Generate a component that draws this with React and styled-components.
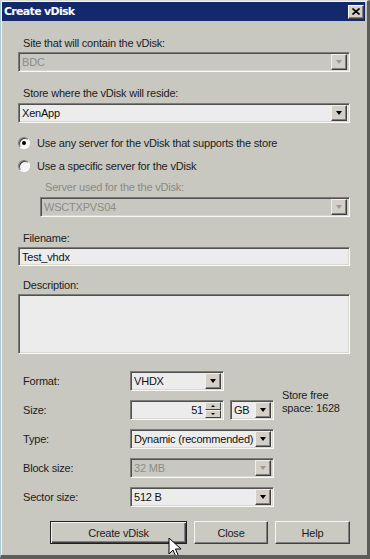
import React from 'react';
import styled, { createGlobalStyle } from 'styled-components';

const GlobalStyle = createGlobalStyle`
  html, body {
    margin: 0;
    padding: 0;
    background: #c8c8c0;
  }
  body {
    font-family: "Liberation Sans", Arial, sans-serif;
    font-size: 11px;
    letter-spacing: -0.2px;
    color: #1c1c1c;
  }
`;

const Window = styled.div`
  position: relative;
  width: 370px;
  height: 559px;
  box-sizing: border-box;
  background: #c8c8c0;
  border-top: 1px solid #dcdcd6;
  border-left: 1px solid #a8c8d0;
  border-right: 3px solid #5c5c58;
  border-bottom: 4px solid #5c5c58;
  box-shadow: inset 1px 1px 0 #f4f4f0;
  padding: 1px 0 0 1px;
  overflow: hidden;
`;

const TitleBar = styled.div`
  height: 19px;
  margin-right: 2px;
  background: #14286c;
  display: flex;
  align-items: center;
  justify-content: space-between;
  padding: 0 1px 0 2px;
`;

const Title = styled.span`
  color: #fff;
  font-family: "DejaVu Sans", Verdana, sans-serif;
  font-weight: bold;
  font-size: 11px;
  letter-spacing: -0.7px;
`;

const CloseBox = styled.div`
  box-sizing: border-box;
  width: 16px;
  height: 14px;
  background: #d4d0c8;
  border: 1px solid;
  border-color: #fff #404040 #404040 #fff;
  box-shadow: inset -1px -1px 0 #808080;
  display: flex;
  align-items: center;
  justify-content: center;
`;

const Body = styled.div`
  padding: 0 17px 0 16px;
`;

const Label = styled.div`
  height: 13px;
  line-height: 13px;
  margin: ${p => p.$top || 0}px 0 ${p => p.$bottom || 2}px ${p => p.$indent || 5}px;
  color: ${p => (p.$disabled ? '#8a8a86' : '#1c1c1c')};
  white-space: nowrap;
`;

const Sunken = styled.div`
  box-sizing: border-box;
  height: ${p => p.$h || 20}px;
  width: ${p => (p.$w ? `${p.$w}px` : 'auto')};
  margin-left: ${p => p.$indent || 0}px;
  background: ${p => (p.$disabled ? '#c8c8c0' : '#ececec')};
  border: 1px solid;
  border-color: #7c7c78 #fafaf6 #fafaf6 #7c7c78;
  box-shadow: inset 1px 1px 0 #505050, inset -1px -1px 0 #d8d8d2;
  display: flex;
  align-items: center;
  padding: 0 2px 0 3px;
  color: ${p => (p.$disabled ? '#8c8c88' : '#111')};
`;

const Value = styled.span`
  flex: 1;
  white-space: nowrap;
  overflow: hidden;
  text-align: ${p => (p.$right ? 'right' : 'left')};
  padding-right: ${p => (p.$right ? 2 : 0)}px;
`;

const DropButton = styled.div`
  box-sizing: border-box;
  flex: none;
  width: 16px;
  height: 16px;
  background: #d4d0c8;
  border: 1px solid;
  border-color: #f0f0ec #404040 #404040 #f0f0ec;
  box-shadow: inset -1px -1px 0 #808080;
  display: flex;
  align-items: center;
  justify-content: center;
`;

const Triangle = styled.div`
  width: 0;
  height: 0;
  border-left: 3.5px solid transparent;
  border-right: 3.5px solid transparent;
  border-top: 4px solid ${p => (p.$disabled ? '#9a9a96' : '#000')};
`;

const SpinBox = styled.div`
  display: flex;
  flex-direction: column;
  flex: none;
  width: 16px;
  height: 16px;
`;

const SpinHalf = styled.div`
  box-sizing: border-box;
  flex: 1;
  background: #d4d0c8;
  border: 1px solid;
  border-color: #f0f0ec #404040 #404040 #f0f0ec;
  display: flex;
  align-items: center;
  justify-content: center;
`;

const SmallTri = styled.div`
  width: 0;
  height: 0;
  border-left: 2px solid transparent;
  border-right: 2px solid transparent;
  ${p => (p.$up ? 'border-bottom: 2px solid #000;' : 'border-top: 2px solid #000;')}
`;

const RadioRow = styled.div`
  display: flex;
  align-items: center;
  height: 14px;
  margin-top: ${p => p.$top || 0}px;
`;

const RadioCircle = styled.div`
  box-sizing: border-box;
  width: 12px;
  height: 12px;
  border-radius: 50%;
  background: #f4f4f2;
  border: 1px solid;
  border-color: #7c7c78 #ffffff #ffffff #7c7c78;
  box-shadow: inset 1px 1px 0 #404040;
  display: flex;
  align-items: center;
  justify-content: center;
  margin-right: 7px;
`;

const Dot = styled.div`
  width: 4px;
  height: 4px;
  border-radius: 50%;
  background: #000;
`;

const Grid = styled.div`
  display: grid;
  grid-template-columns: 107px 144px auto;
  grid-auto-rows: 20px;
  row-gap: 9px;
  margin: 17px 0 0 5px;
  align-items: center;
`;

const RowLabel = styled.div`
  grid-column: 1;
`;

const Controls = styled.div`
  grid-column: 2;
  display: flex;
  gap: 6px;
`;

const StoreFree = styled.div`
  grid-column: 3;
  grid-row: 1 / span 2;
  align-self: end;
  margin: 0 0 5px 8px;
  line-height: 13px;
  white-space: nowrap;
`;

const ButtonBar = styled.div`
  display: flex;
  margin: 14px 0 0 32px;
  gap: 7px;
`;

const Button = styled.div`
  box-sizing: border-box;
  width: ${p => p.$w}px;
  height: 23px;
  display: flex;
  align-items: center;
  justify-content: center;
  background: #cacac2;
  border: 1px solid;
  border-color: ${p => (p.$default ? '#202020' : '#f4f4f0 #404040 #404040 #f4f4f0')};
  box-shadow: ${p =>
    p.$default
      ? 'inset 1px 1px 0 #f4f4f0, inset -1px -1px 0 #404040, inset -2px -2px 0 #808080'
      : 'inset -1px -1px 0 #808080'};
  color: #1c1c1c;
`;

const Cursor = styled.svg`
  position: absolute;
  left: 167px;
  top: 536px;
`;

function Combo({ value, width, disabled, indent }) {
  return (
    <Sunken $w={width} $disabled={disabled} $indent={indent}>
      <Value>{value}</Value>
      <DropButton>
        <Triangle $disabled={disabled} />
      </DropButton>
    </Sunken>
  );
}

function Radio({ checked, label, top }) {
  return (
    <RadioRow $top={top}>
      <RadioCircle>{checked && <Dot />}</RadioCircle>
      <span>{label}</span>
    </RadioRow>
  );
}

function App() {
  return (
    <>
      <GlobalStyle />
      <Window>
        <TitleBar>
          <Title>Create vDisk</Title>
          <CloseBox>
            <svg width="8" height="7" viewBox="0 0 8 7">
              <path d="M0.5 0.5 L7.5 6.5 M7.5 0.5 L0.5 6.5" stroke="#000" strokeWidth="1.6" />
            </svg>
          </CloseBox>
        </TitleBar>
        <Body>
          <Label $top={16}>Site that will contain the vDisk:</Label>
          <Combo value="BDC" disabled />

          <Label $top={15} $bottom={3}>Store where the vDisk will reside:</Label>
          <Combo value="XenApp" />

          <Radio checked top={13} label="Use any server for the vDisk that supports the store" />
          <Radio top={9} label="Use a specific server for the vDisk" />

          <Label $top={8} $bottom={3} $indent={27} $disabled>
            Server used for the the vDisk:
          </Label>
          <Combo value="WSCTXPVS04" disabled indent={22} />

          <Label $top={15}>Filename:</Label>
          <Sunken $h={19}>
            <Value>Test_vhdx</Value>
          </Sunken>

          <Label $top={13}>Description:</Label>
          <Sunken $h={60} />

          <Grid>
            <RowLabel>Format:</RowLabel>
            <Controls>
              <Combo value="VHDX" width={94} />
            </Controls>
            <StoreFree>
              Store free
              <br />
              space: 1628
            </StoreFree>

            <RowLabel>Size:</RowLabel>
            <Controls>
              <Sunken $w={94}>
                <Value $right>51</Value>
                <SpinBox>
                  <SpinHalf>
                    <SmallTri $up />
                  </SpinHalf>
                  <SpinHalf>
                    <SmallTri />
                  </SpinHalf>
                </SpinBox>
              </Sunken>
              <Combo value="GB" width={44} />
            </Controls>

            <RowLabel>Type:</RowLabel>
            <Controls>
              <Combo value="Dynamic (recommended)" width={144} />
            </Controls>

            <RowLabel>Block size:</RowLabel>
            <Controls>
              <Combo value="32 MB" width={144} disabled />
            </Controls>

            <RowLabel>Sector size:</RowLabel>
            <Controls>
              <Combo value="512 B" width={144} />
            </Controls>
          </Grid>

          <ButtonBar>
            <Button $w={137} $default>Create vDisk</Button>
            <Button $w={74}>Close</Button>
            <Button $w={75}>Help</Button>
          </ButtonBar>
        </Body>
        <Cursor width="14" height="22" viewBox="0 0 14 22">
          <path
            d="M1 1 L1 17 L5 13 L8 20 L10.5 19 L7.5 12 L13 12 Z"
            fill="#fff"
            stroke="#000"
            strokeWidth="1"
            strokeLinejoin="miter"
          />
        </Cursor>
      </Window>
    </>
  );
}

export default App;
